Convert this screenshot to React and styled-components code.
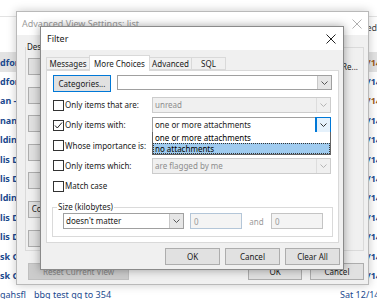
import React from "react";
import styled, { createGlobalStyle } from "styled-components";

const GlobalStyle = createGlobalStyle`
  *, *::before, *::after { box-sizing: border-box; }
  html, body { margin: 0; padding: 0; background: #ffffff; }
  body {
    width: 377px;
    height: 299px;
    overflow: hidden;
    font-family: "Noto Sans", "Liberation Sans", sans-serif;
  }
`;

const Desktop = styled.div`
  position: relative;
  width: 377px;
  height: 299px;
  overflow: hidden;
  background: #fff;
`;

/* ---------- background mail list ---------- */
const MailList = styled.div`
  display: flex;
  flex-direction: column;
  width: 377px;
`;
const ListTop = styled.div`
  height: 17px;
  flex: none;
  border-bottom: 1px solid #e3e3e3;
`;
const ListHeader = styled.div`
  height: 36px;
  flex: none;
  display: flex;
  justify-content: flex-end;
  padding-top: 5px;
  font-size: 9px;
  line-height: 12px;
  color: #444;
  border-bottom: 1px solid #e3e3e3;
`;
const MailRow = styled.div`
  height: 19.4px;
  flex: none;
  display: grid;
  grid-template-columns: 34px 1fr 37px;
  align-items: center;
  background: ${(p) => (p.$selected ? "#e3e3e3" : "#fff")};
  font-size: 9px;
  line-height: 12px;
  white-space: nowrap;
  overflow: hidden;
`;
const Sender = styled.span`
  color: #1b4a8f;
  font-weight: ${(p) => (p.$unread ? 700 : 400)};
  overflow: visible;
`;
const Subject = styled.span`
  color: #1b4a8f;
  overflow: hidden;
`;
const DateText = styled.span`
  color: ${(p) => (p.$tone === "brown" ? "#9a5a1c" : "#1b4a8f")};
  font-weight: ${(p) => (p.$unread ? 700 : 400)};
  overflow: hidden;
`;

/* ---------- windows ---------- */
const Window = styled.section`
  position: absolute;
  left: ${(p) => p.$x}px;
  top: ${(p) => p.$y}px;
  width: ${(p) => p.$w}px;
  height: ${(p) => p.$h}px;
  display: flex;
  flex-direction: column;
  background: #f0f0f0;
  border: 1px solid ${(p) => (p.$active ? "#8a8a8a" : "#b9b9b9")};
  box-shadow: 0 0 9px rgba(0, 0, 0, ${(p) => (p.$active ? 0.35 : 0.22)});
`;
const TitleBar = styled.header`
  height: 23px;
  flex: none;
  display: flex;
  align-items: center;
  justify-content: space-between;
  background: #fff;
  padding: 0 ${(p) => p.$pr}px 0 ${(p) => p.$pl}px;
`;
const TitleText = styled.span`
  font-size: 9px;
  line-height: 12px;
  color: ${(p) => (p.$inactive ? "#9c9c9c" : "#1a1a1a")};
`;
const CloseGlyph = ({ color }) => (
  <svg width="10" height="10" viewBox="0 0 10 10">
    <path d="M0.5 0.5 L9.5 9.5 M9.5 0.5 L0.5 9.5" stroke={color} strokeWidth="1" />
  </svg>
);

const Button = styled.div`
  width: ${(p) => p.$w}px;
  height: 17px;
  flex: none;
  display: flex;
  align-items: center;
  justify-content: center;
  padding: 0 4px;
  background: ${(p) => (p.$disabled ? "#cccccc" : "#e1e1e1")};
  border: 1px solid ${(p) => (p.$focus ? "#0078d7" : p.$disabled ? "#bfbfbf" : "#adadad")};
  color: ${(p) => (p.$disabled ? "#838383" : "#1a1a1a")};
  font-size: 8px;
  line-height: 10px;
  white-space: nowrap;
  overflow: hidden;
`;
const ButtonLabel = styled.span`
  flex: none;
`;

/* ---------- advanced view settings (inactive) ---------- */
const AdvBody = styled.div`
  flex: 1;
  display: flex;
  flex-direction: column;
  padding: 7px 4px 4px 8px;
`;
const GroupBox = styled.fieldset`
  margin: ${(p) => p.$margin || "0"};
  min-width: 0;
  height: ${(p) => p.$h}px;
  border: 1px solid #dadada;
  padding: ${(p) => p.$pad};
`;
const Legend = styled.legend`
  font-size: 8px;
  line-height: 10px;
  padding: 0 1px;
  margin-left: ${(p) => p.$ml}px;
  color: #1a1a1a;
`;
const AdvRows = styled.div`
  display: flex;
  flex-direction: column;
  gap: 11.6px;
`;
const AdvRow = styled.div`
  height: 17px;
  display: grid;
  grid-template-columns: 101px 1fr;
  column-gap: 8px;
  align-items: center;
`;
const Desc = styled.div`
  display: flex;
  justify-content: ${(p) => (p.$tail ? "flex-end" : "flex-start")};
  overflow: hidden;
  white-space: nowrap;
  font-size: 8px;
  line-height: 10px;
  color: #1a1a1a;
`;
const AdvFooter = styled.div`
  margin-top: 12px;
  display: flex;
  align-items: flex-start;
  padding-left: 3px;
  gap: 8px;
`;
const FooterSpacer = styled.div`
  flex: 1;
`;

/* ---------- filter dialog ---------- */
const FilterBody = styled.div`
  flex: 1;
  display: flex;
  flex-direction: column;
  padding: 5px 4px 4px 5px;
`;
const TabStrip = styled.div`
  height: 15px;
  flex: none;
  display: flex;
  align-items: flex-end;
`;
const Tab = styled.div`
  position: relative;
  z-index: ${(p) => (p.$selected ? 1 : 0)};
  width: ${(p) => p.$w}px;
  height: ${(p) => (p.$selected ? 16 : 13)}px;
  margin-bottom: ${(p) => (p.$selected ? -1 : 0)}px;
  display: flex;
  align-items: center;
  justify-content: center;
  background: ${(p) => (p.$selected ? "#fff" : "#f0f0f0")};
  border: 1px solid #d9d9d9;
  border-bottom: ${(p) => (p.$selected ? "none" : "1px solid #d9d9d9")};
  margin-left: ${(p) => (p.$first ? 0 : -1)}px;
  font-size: 8px;
  line-height: 10px;
  color: #1a1a1a;
  white-space: nowrap;
`;
const Panel = styled.div`
  height: 173px;
  flex: none;
  display: flex;
  flex-direction: column;
  background: #fff;
  border: 1px solid #d9d9d9;
  padding: 4px 6px 0 6px;
`;
const CategoryRow = styled.div`
  display: flex;
  gap: 6px;
  height: 15px;
`;
const CritGrid = styled.div`
  margin-top: 7px;
  display: grid;
  grid-template-columns: 99px 179px;
  grid-auto-rows: 16px;
  row-gap: 4.25px;
  align-items: center;
`;
const CheckLabel = styled.label`
  display: flex;
  align-items: center;
  gap: 1px;
  font-size: 8px;
  line-height: 10px;
  color: #1a1a1a;
  white-space: nowrap;
  grid-column: ${(p) => (p.$full ? "1 / span 2" : "auto")};
`;
const Box = styled.span`
  width: 11px;
  height: 11px;
  flex: none;
  display: flex;
  align-items: center;
  justify-content: center;
  background: #fff;
  border: 1px solid #333;
`;
const Combo = styled.div`
  position: relative;
  width: ${(p) => (p.$w ? `${p.$w}px` : "auto")};
  flex: ${(p) => (p.$grow ? 1 : "none")};
  height: ${(p) => p.$h || 16}px;
  display: flex;
  align-items: stretch;
  background: ${(p) => (p.$disabled ? "#f0f0f0" : "#fff")};
  border: 1px solid ${(p) => (p.$disabled ? "#cccccc" : "#a0a0a0")};
  font-size: 8px;
  color: ${(p) => (p.$disabled ? "#8d8d8d" : "#1a1a1a")};
`;
const ComboValue = styled.span`
  flex: 1;
  display: flex;
  align-items: center;
  padding-left: 2px;
  line-height: 10px;
  white-space: nowrap;
  overflow: hidden;
`;
const ArrowBox = styled.span`
  width: 14px;
  flex: none;
  display: flex;
  align-items: center;
  justify-content: center;
  background: ${(p) =>
    p.$tone === "focus" ? "#e5f1fb" : p.$tone === "disabled" ? "#f0f0f0" : "#e6e6e6"};
  border-left: 1px solid
    ${(p) => (p.$tone === "focus" ? "#0078d7" : p.$tone === "disabled" ? "#dddddd" : "#c8c8c8")};
  outline: ${(p) => (p.$tone === "focus" ? "1px solid #0078d7" : "none")};
`;
const Popup = styled.ul`
  position: absolute;
  z-index: 5;
  left: -1px;
  right: -1px;
  top: 100%;
  margin: 0;
  padding: 0;
  list-style: none;
  background: #fff;
  border: 1px solid #646464;
  border-top: none;
`;
const PopupItem = styled.li`
  height: 11px;
  display: flex;
  align-items: center;
  padding-left: 2px;
  font-size: 8px;
  line-height: 10px;
  color: #000;
  background: ${(p) => (p.$active ? "#9fcbef" : "#fff")};
  outline: ${(p) => (p.$active ? "1px dotted #333" : "none")};
  outline-offset: -1px;
`;
const SizeRow = styled.div`
  display: flex;
  align-items: center;
  height: 16px;
`;
const NumInput = styled.div`
  width: 52px;
  height: 16px;
  flex: none;
  margin-left: ${(p) => p.$ml || 0}px;
  display: flex;
  align-items: center;
  padding-left: 3px;
  background: #f4f4f4;
  border: 1px solid ${(p) => (p.$accent ? "#b4c6d8" : "#c4c4c4")};
  font-size: 8px;
  color: #9a9a9a;
`;
const AndLabel = styled.span`
  width: 29px;
  flex: none;
  text-align: center;
  font-size: 8px;
  color: #9a9a9a;
`;
const ButtonRow = styled.div`
  margin-top: 5px;
  margin-right: -1px;
  display: flex;
  justify-content: flex-end;
  gap: 5px;
`;

const Chevron = ({ color = "#555" }) => (
  <svg width="7" height="4" viewBox="0 0 7 4">
    <path d="M0.5 0.5 L3.5 3.5 L6.5 0.5" fill="none" stroke={color} strokeWidth="1" />
  </svg>
);
const Check = () => (
  <svg width="9" height="9" viewBox="0 0 9 9">
    <path d="M1 4.5 L3.3 7 L8 1.5" fill="none" stroke="#222" strokeWidth="1" />
  </svg>
);

const rows = [
  { s: "dford", sel: true, tone: "brown" },
  { s: "dford" },
  { s: "an - I", tone: "brown" },
  { s: "nan - I" },
  { s: "lding" },
  { s: "lis D" },
  { s: "lis D" },
  { s: "lding" },
  { s: "lis D" },
  { s: "lis D" },
  { s: "sk Co" },
  { s: "sk Co" },
];

const advRows = [
  { b: "Columns...", d: "Importance, Reminder, Icon, Flag Status, Attachment, From, Subject, Re...", tail: true },
  { b: "Group By...", d: "None" },
  { b: "Sort...", d: "Received (descending)" },
  { b: "Filter...", d: "Off" },
  { b: "Other Settings...", d: "Fonts and other Table View settings" },
  { b: "Conditional Formatting...", d: "User defined fonts on each message" },
  { b: "Format Columns...", d: "Specify the display formats" },
];

export default function App() {
  return (
    <>
      <GlobalStyle />
      <Desktop>
        <MailList>
          <ListTop />
          <ListHeader>Received</ListHeader>
          {rows.map((r, i) => (
            <MailRow key={i} $selected={r.sel}>
              <Sender $unread>{r.s}</Sender>
              <Subject />
              <DateText $unread $tone={r.tone}>Sat 12/14/2019</DateText>
            </MailRow>
          ))}
          <MailRow>
            <Sender>gahsfl</Sender>
            <Subject>bbg test gg to 354</Subject>
            <DateText>Sat 12/14/2019</DateText>
          </MailRow>
        </MailList>

        <Window $x={16} $y={11} $w={353} $h={274}>
          <TitleBar $pl={5} $pr={6}>
            <TitleText $inactive>Advanced View Settings: list</TitleText>
            <CloseGlyph color="#b0b0b0" />
          </TitleBar>
          <AdvBody>
            <GroupBox $h={209} $pad="6px 5px 0 2px">
              <Legend $ml={-2}>Description</Legend>
              <AdvRows>
                {advRows.map((r) => (
                  <AdvRow key={r.b}>
                    <Button $w={101}>
                      <ButtonLabel>{r.b}</ButtonLabel>
                    </Button>
                    <Desc $tail={r.tail}>{r.d}</Desc>
                  </AdvRow>
                ))}
              </AdvRows>
            </GroupBox>
            <AdvFooter>
              <Button $w={101} $disabled>
                <ButtonLabel>Reset Current View</ButtonLabel>
              </Button>
              <FooterSpacer />
              <Button $w={54}>OK</Button>
              <Button $w={54}>Cancel</Button>
            </AdvFooter>
          </AdvBody>
        </Window>

        <Window $x={40} $y={26} $w={304} $h={244} $active>
          <TitleBar $pl={6} $pr={7}>
            <TitleText>Filter</TitleText>
            <CloseGlyph color="#222" />
          </TitleBar>
          <FilterBody>
            <TabStrip>
              <Tab $w={44} $first>Messages</Tab>
              <Tab $w={61} $selected>More Choices</Tab>
              <Tab $w={43}>Advanced</Tab>
              <Tab $w={35}>SQL</Tab>
            </TabStrip>
            <Panel>
              <CategoryRow>
                <Button $w={58} $focus>Categories...</Button>
                <Combo $grow $h={15}>
                  <ComboValue />
                  <ArrowBox>
                    <Chevron />
                  </ArrowBox>
                </Combo>
              </CategoryRow>
              <CritGrid>
                <CheckLabel>
                  <Box />
                  Only items that are:
                </CheckLabel>
                <Combo $disabled>
                  <ComboValue>unread</ComboValue>
                  <ArrowBox $tone="disabled">
                    <Chevron color="#b5b5b5" />
                  </ArrowBox>
                </Combo>

                <CheckLabel>
                  <Box>
                    <Check />
                  </Box>
                  Only items with:
                </CheckLabel>
                <Combo>
                  <ComboValue>one or more attachments</ComboValue>
                  <ArrowBox $tone="focus">
                    <Chevron color="#333" />
                  </ArrowBox>
                  <Popup>
                    <PopupItem>one or more attachments</PopupItem>
                    <PopupItem $active>no attachments</PopupItem>
                  </Popup>
                </Combo>

                <CheckLabel>
                  <Box />
                  Whose importance is:
                </CheckLabel>
                <Combo $disabled>
                  <ComboValue>normal</ComboValue>
                  <ArrowBox $tone="disabled">
                    <Chevron color="#b5b5b5" />
                  </ArrowBox>
                </Combo>

                <CheckLabel>
                  <Box />
                  Only items which:
                </CheckLabel>
                <Combo $disabled>
                  <ComboValue>are flagged by me</ComboValue>
                  <ArrowBox $tone="disabled">
                    <Chevron color="#b5b5b5" />
                  </ArrowBox>
                </Combo>

                <CheckLabel $full>
                  <Box />
                  Match case
                </CheckLabel>
              </CritGrid>
              <GroupBox $margin="8px -1px 0 -1px" $pad="1px 8px 7px 10px">
                <Legend $ml={-6}>Size (kilobytes)</Legend>
                <SizeRow>
                  <Combo $w={121}>
                    <ComboValue>doesn't matter</ComboValue>
                    <ArrowBox>
                      <Chevron />
                    </ArrowBox>
                  </Combo>
                  <NumInput $ml={6} $accent>0</NumInput>
                  <AndLabel>and</AndLabel>
                  <NumInput>0</NumInput>
                </SizeRow>
              </GroupBox>
            </Panel>
            <ButtonRow>
              <Button $w={55}>OK</Button>
              <Button $w={55}>Cancel</Button>
              <Button $w={55}>Clear All</Button>
            </ButtonRow>
          </FilterBody>
        </Window>
      </Desktop>
    </>
  );
}
